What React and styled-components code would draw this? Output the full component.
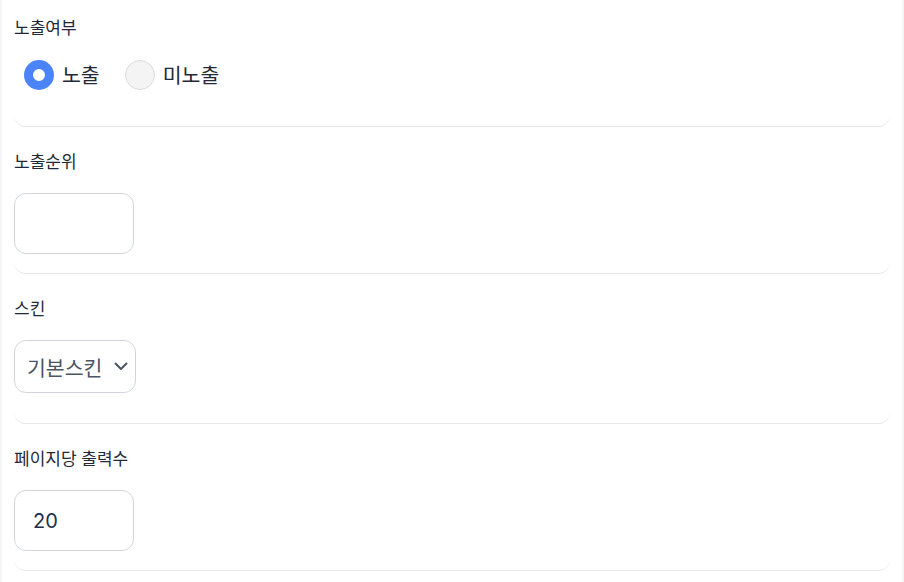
import React from "react";
import styled, { createGlobalStyle } from "styled-components";

const Global = createGlobalStyle`
  html, body { margin: 0; padding: 0; background: #f6f6f6; }
  body { font-family: "Inter", "Noto Sans CJK KR", sans-serif; }
  * { box-sizing: border-box; }
`;

const Page = styled.div`
  margin: 0 2px;
  background: #ffffff;
  padding: 0 12px;
  min-height: 582px;
`;

const Section = styled.section`
  padding: ${(p) => p.$top ?? 23}px 0 ${(p) => p.$bottom ?? 19}px;
  border-bottom: 1px solid #e5e7eb;
  border-radius: 12px;
`;

const Label = styled.div`
  font-size: 17px;
  line-height: 24px;
  color: #1f2937;
  margin-bottom: ${(p) => p.$gap ?? 19}px;
`;

const RadioGroup = styled.div`
  display: flex;
  align-items: center;
  gap: 25px;
  padding-left: 10px;
  height: 30px;
`;

const RadioItem = styled.label`
  display: flex;
  align-items: center;
  gap: 8px;
  font-size: 20.5px;
  line-height: 30px;
  padding-top: 2px;
  color: #1f2937;
`;

const RadioCircle = styled.span`
  width: 30px;
  height: 30px;
  border-radius: 50%;
  flex: none;
  margin-top: -2px;
  ${(p) =>
    p.$checked
      ? `background: #ffffff; border: 9px solid #4a84f8;`
      : `background: #f4f4f4; border: 1px solid #dcdcdc;`}
`;

const TextInput = styled.div`
  width: 120px;
  height: 61px;
  border: 1px solid #d1d5db;
  border-radius: 12px;
  padding: 0 18px;
  display: flex;
  align-items: center;
  font-size: 20px;
  color: #1f2f4a;
`;

const Select = styled.div`
  width: 122px;
  height: 53px;
  border: 1px solid #d1d5db;
  border-radius: 12px;
  padding: 0 7px 0 12px;
  display: flex;
  align-items: center;
  justify-content: space-between;
  font-size: 20.5px;
  color: #4b5563;
`;

const Chevron = () => (
  <svg width="14" height="9" viewBox="0 0 14 9" fill="none" stroke="#4b5563" strokeWidth="2" strokeLinecap="round" strokeLinejoin="round">
    <path d="M1.5 1.5l5.5 5.5 5.5-5.5" />
  </svg>
);

export default function App() {
  return (
    <>
      <Global />
      <Page>
        <Section $top={16} $bottom={36}>
          <Label $gap={20}>노출여부</Label>
          <RadioGroup>
            <RadioItem>
              <RadioCircle $checked />
              노출
            </RadioItem>
            <RadioItem>
              <RadioCircle />
              미노출
            </RadioItem>
          </RadioGroup>
        </Section>
        <Section>
          <Label>노출순위</Label>
          <TextInput />
        </Section>
        <Section $bottom={30}>
          <Label>스킨</Label>
          <Select>
            기본스킨
            <Chevron />
          </Select>
        </Section>
        <Section>
          <Label>페이지당 출력수</Label>
          <TextInput>20</TextInput>
        </Section>
      </Page>
    </>
  );
}
